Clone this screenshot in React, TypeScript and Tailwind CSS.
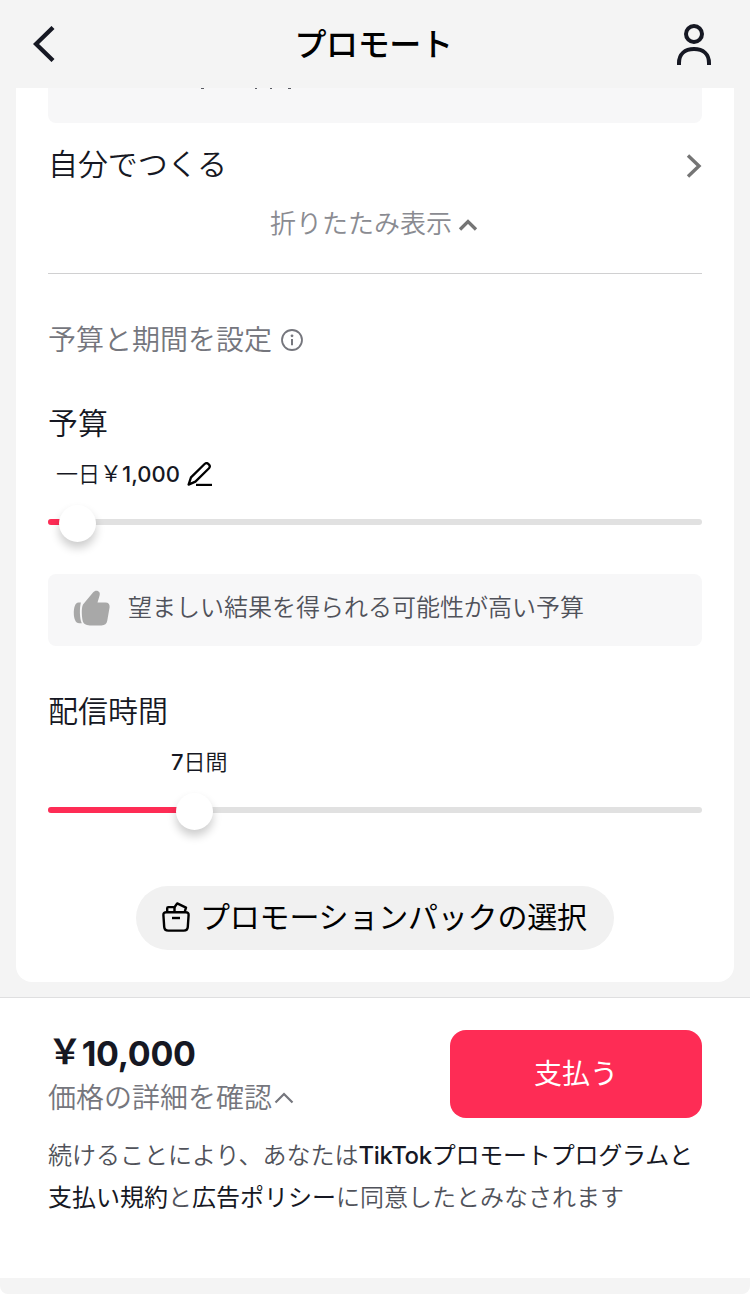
import type { ReactNode } from "react"
import { clsx } from "clsx"

interface SliderProps {
	thumbOffset: number
}

function Slider({ thumbOffset }: SliderProps): ReactNode {
	return (
		<div className="relative h-1.5 rounded-full bg-[#e1e1e1]">
			<div className="h-full rounded-full bg-[#fe2c55]" style={{ width: thumbOffset + 18 }} />
			<div
				className="absolute -top-[14px] size-[37px] rounded-full bg-white shadow-[0_6px_10px_rgba(0,0,0,0.2)]"
				style={{ left: thumbOffset }}
			/>
		</div>
	)
}

interface ChevronProps {
	className?: string
	points: string
	viewBox: string
	strokeWidth: number
}

function Chevron({ className, points, viewBox, strokeWidth }: ChevronProps): ReactNode {
	return (
		<svg className={clsx("shrink-0", className)} viewBox={viewBox} fill="none" stroke="currentColor" strokeWidth={strokeWidth}>
			<polyline points={points} />
		</svg>
	)
}

function UserIcon(): ReactNode {
	return (
		<svg className="h-[42px] w-9" viewBox="0 0 36 42" fill="none" stroke="currentColor" strokeWidth="4">
			<circle cx="18" cy="11" r="8" />
			<path d="M3 42V40C3 31 9 26 18 26S33 31 33 40V42" />
		</svg>
	)
}

function InfoIcon(): ReactNode {
	return (
		<svg className="size-[22px]" viewBox="0 0 22 22" fill="none" stroke="currentColor" strokeWidth="1.8">
			<circle cx="11" cy="11" r="10" />
			<path d="M11 10V16.3" strokeWidth="2" />
			<circle cx="11" cy="6.8" r="1.4" fill="currentColor" stroke="none" />
		</svg>
	)
}

function EditIcon(): ReactNode {
	return (
		<svg className="h-6 w-[26px]" viewBox="0 0 26 24" fill="none" stroke="currentColor" strokeWidth="2.3" strokeLinejoin="round">
			<path d="M1.6 22.6L4 15.4L17.6 2C18.8 .9 20.2 1 21.2 1.9L22 2.6C23 3.6 23 5 22 6.2L8.4 19.6Z" />
			<path d="M9 22.9H25" strokeWidth="2.2" />
		</svg>
	)
}

function ThumbIcon(): ReactNode {
	return (
		<svg className="h-9 w-[37px]" viewBox="0 0 37 36" fill="currentColor">
			<path d="M5.5 12.5H7.9C6.5 17.5 6.5 28.5 8.8 33.3H6.4C2.3 33.3 .8 28 .8 23.2C.8 18.2 2 12.5 5.5 12.5Z" />
			<path d="M10 14.5L20.2 2.3C21.8 .2 25.2 .2 26.5 2.5C27 3.5 26.8 5.2 26.3 6.6L24.5 12.6H32.5C35.3 12.6 36.9 14.6 36.6 17.2L34.3 30.5C33.7 33.8 31.8 35.4 28.5 35.4H17C12.5 35.4 10 33.6 9.4 29.5C8.8 25.5 8.2 18 10 14.5Z" />
		</svg>
	)
}

function PackIcon(): ReactNode {
	return (
		<svg className="h-[30px] w-7" viewBox="0 0 28 30" fill="none" stroke="currentColor" strokeWidth="2.4" strokeLinejoin="round" strokeLinecap="round">
			<path d="M4.4 10.2H23.6C25.6 10.2 26.7 11.2 26.6 13L25.8 24.8C25.6 27.4 24.2 28.6 21.7 28.6H6.3C3.8 28.6 2.4 27.4 2.2 24.8L1.4 13C1.3 11.2 2.4 10.2 4.4 10.2Z" />
			<path d="M5.2 9.8V6.2C5.2 5.5 5.6 5.1 6.3 5.1H11.3C12.1 5.1 12.5 5.5 12.5 6.2V9.8" />
			<path d="M12.5 5.2L15.2 1.4L24 5.6L22.8 9.5" />
			<path d="M10 16H18" strokeLinecap="butt" />
		</svg>
	)
}

export default function App(): ReactNode {
	return (
		<div
			lang="ja"
			className="flex h-[1294px] w-[750px] flex-col overflow-hidden bg-[#f4f4f4] font-['Inter','Noto_Sans_CJK_JP',sans-serif] font-[350] text-[#161823]"
		>
			<header className="flex h-[88px] shrink-0 items-center justify-between pr-[38px] pl-[33px]">
				<Chevron className="h-9 w-[22px]" viewBox="0 0 22 36" points="20,1.5 3,18 20,34.5" strokeWidth={4.3} />
				<h1 className="mt-0.5 ml-4 text-[32px] leading-[88px] font-medium tracking-[-0.4px] text-black">プロモート</h1>
				<UserIcon />
			</header>

			<main className="mx-4 flex h-[894px] shrink-0 flex-col rounded-b-2xl bg-white px-8">
				{/* Tail of the card scrolled under the header */}
				<div className="h-[35px] shrink-0 rounded-b-lg bg-[#f7f7f8]">
					<svg className="block h-0.5 w-full" viewBox="0 0 654 2" fill="#161823" fillOpacity="0.7">
						<path d="M153 0H156V1H153ZM207 0H209V1H207ZM222 0H224V1H222ZM240 0H243V1H240Z" />
					</svg>
				</div>

				<div className="flex h-[82px] items-center justify-between text-[30px] leading-[82px]">
					<span className="tracking-[-0.1px]">自分でつくる</span>
					<Chevron className="mt-1 h-6 w-4 text-[#757575]" viewBox="0 0 16 24" points="2,1.5 13,12 2,22.5" strokeWidth={3.4} />
				</div>
				<div className="flex h-[68px] items-start justify-center gap-1.5 pr-0.5 text-[26px] leading-[38px] text-[#8a8b91]">
					<span>折りたたみ表示</span>
					<Chevron className="mt-3.5 h-3 w-5 text-[#757575]" viewBox="0 0 20 12" points="2,10.5 10,2.5 18,10.5" strokeWidth={3.3} />
				</div>
				<div className="h-px shrink-0 bg-[#d0d0d1]" />

				<div className="mt-[46px] flex h-10 shrink-0 items-center gap-[9px] text-[28px] leading-10 text-[#75767d]">
					<h2>予算と期間を設定</h2>
					<InfoIcon />
				</div>

				<h3 className="mt-[41px] h-11 shrink-0 text-[30px] leading-[44px]">予算</h3>
				<div className="mt-[13px] flex h-8 shrink-0 items-center gap-[7px] pl-2 text-[22px] leading-8">
					<span>
						一日<span className="inline-block -translate-y-px font-normal">￥</span>
						<span className="font-medium">1,000</span>
					</span>
					<span className="text-black"><EditIcon /></span>
				</div>
				<div className="mt-[29px]">
					<Slider thumbOffset={11} />
				</div>

				<div className="mt-[49px] flex h-[72px] shrink-0 items-center gap-[18px] rounded-lg bg-[#f7f7f8] pb-1 pl-[25px] text-2xl text-[#50525a]">
					<span className="text-[#a8a8a8]"><ThumbIcon /></span>
					<span className="leading-[68px]">望ましい結果を得られる可能性が高い予算</span>
				</div>

				<h3 className="mt-[43px] h-11 shrink-0 text-[30px] leading-[44px]">配信時間</h3>
				<div className="mt-[13px] h-8 shrink-0 pl-[123px] text-[22px] leading-8">
					<span className="font-medium">7</span>日間
				</div>
				<div className="mt-[29px]">
					<Slider thumbOffset={128} />
				</div>

				<button className="mt-[73px] flex h-16 w-[478px] shrink-0 items-center gap-2.5 self-center rounded-full bg-[#f1f1f1] pb-0.5 pl-[26px] text-[30px] font-normal text-black">
					<PackIcon />
					<span className="leading-[60px] tracking-[-0.2px] whitespace-nowrap">プロモーションパックの選択</span>
				</button>
			</main>

			<footer className="mt-[15px] h-[281px] shrink-0 border-t border-[#dfdfe0] bg-white px-12 pt-8">
				<div className="flex h-[88px] items-center justify-between">
					<div className="pt-1">
						<div className="h-11 text-[34px] leading-[44px] font-bold tracking-[-0.3px]">
							<span className="inline-block -translate-y-0.5">￥</span>10,000
						</div>
						<div className="flex h-11 items-center gap-0.5 text-[28px] leading-[44px] text-[#75767d]">
							<span>価格の詳細を確認</span>
							<Chevron className="h-3 w-5" viewBox="0 0 20 12" points="1.5,10.5 10,2 18.5,10.5" strokeWidth={2.2} />
						</div>
					</div>
					<button className="h-[88px] w-[252px] rounded-2xl bg-[#fe2c55] text-[28px] font-normal text-white">支払う</button>
				</div>
				<p className="mt-[17px] text-2xl leading-[42px] whitespace-nowrap text-[#50525a]">
					続けることにより、あなたは
					<span className="font-normal text-[#161823]"><span className="font-medium tracking-[-0.4px]">TikTok</span><span className="tracking-[-0.2px]">プロモートプログラムと</span><br />支払い規約</span>
					と
					<span className="font-normal text-[#161823]">広告ポリシー</span>
					に同意したとみなされます
				</p>
			</footer>

			<div className="h-4 shrink-0 bg-white">
				<div className="h-full rounded-b-lg bg-[#f4f4f4]" />
			</div>
		</div>
	)
}
